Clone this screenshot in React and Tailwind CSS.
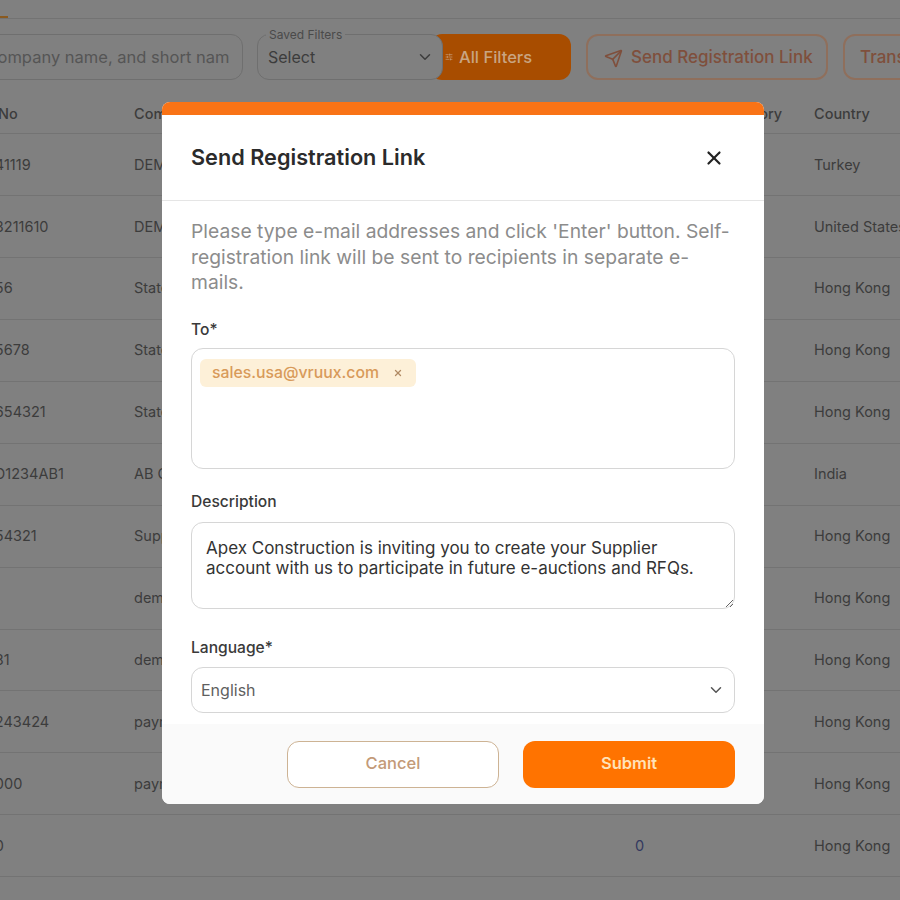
import React from 'react';
import { ChevronDown, Send, SlidersHorizontal, X } from 'lucide-react';

const rows = [
  { no: '12345641119', company: 'DEMO Company', country: 'Turkey' },
  { no: '1234563211610', company: 'DEMO Company', country: 'United States' },
  { no: '12345656', company: 'State Company', country: 'Hong Kong' },
  { no: '1234565678', company: 'State Company', country: 'Hong Kong' },
  { no: '123456654321', company: 'State Company', country: 'Hong Kong' },
  { no: '123456D1234AB1', company: 'AB Company', country: 'India' },
  { no: '12345654321', company: 'Supplier', country: 'Hong Kong' },
  { no: '', company: 'demo', country: 'Hong Kong' },
  { no: '12345681', company: 'demo', country: 'Hong Kong' },
  { no: '123456243424', company: 'payment', country: 'Hong Kong' },
  { no: '123456000', company: 'payment', country: 'Hong Kong' },
  { no: '1234560', company: '', zero: '0', country: 'Hong Kong' },
  { no: '', company: '', country: '' },
];

const cols = 'grid grid-cols-[190px_501px_83px_96px_200px] -ml-[56px] w-[1070px] items-center';

const TableRow = ({ row }) => (
  <div className={`${cols} h-[61.95px] shrink-0 border-b border-[#737373] text-[14.5px] text-[#3c3c3c]`}>
    <span>{row.no}</span>
    <span>{row.company}</span>
    <span className="text-[#33395f]">{row.zero}</span>
    <span />
    <span>{row.country}</span>
  </div>
);

const App = () => {
  return (
    <div className="relative h-[900px] w-[900px] overflow-hidden bg-[#808080] font-[Inter,sans-serif]">
      {/* Page behind the dialog, already dimmed */}
      <div className="relative h-[19px] border-b border-[#737373]">
        <div className="absolute bottom-0 left-0 h-[2px] w-[8px] bg-[#8a5a20]" />
      </div>

      <div className="mt-[15px] flex h-[46px] items-stretch">
        <div className="-ml-[108px] flex w-[351px] shrink-0 items-center overflow-hidden rounded-xl border border-[#6f6f6f] pl-[12px]">
          <span className="w-[324px] shrink-0 overflow-hidden whitespace-nowrap text-[16.5px] text-[#555555]">Search by company name, and short name</span>
        </div>
        <div className="relative z-10 ml-[14px] flex w-[186px] shrink-0 items-center justify-between rounded-xl border border-[#6f6f6f] bg-[#808080] pl-[10px] pr-[8px]">
          <span className="absolute -top-[6px] left-[8px] bg-[#808080] px-[3px] text-[12px] leading-[12px] text-[#4a4a4a]">Saved Filters</span>
          <span className="text-[16px] text-[#3c3c3c]">Select</span>
          <ChevronDown className="h-[18px] w-[18px] text-[#3c3c3c]" />
        </div>
        <div className="-ml-[13px] flex w-[141px] shrink-0 items-center gap-[6px] rounded-xl bg-[#a84d00] pl-[15px] text-[16.5px] font-medium text-[#c9a582]">
          <SlidersHorizontal className="h-[8px] w-[8px]" />
          <span>All Filters</span>
        </div>
        <div className="ml-[15px] flex w-[242px] shrink-0 items-center gap-[8px] rounded-xl border-2 border-[#8f6f5c] pl-[16px] pt-[2px] text-[17px] font-medium text-[#7f4f3c]">
          <Send className="h-[19px] w-[19px]" />
          <span>Send Registration Link</span>
        </div>
        <div className="ml-[15px] flex w-[120px] shrink-0 items-center rounded-xl border-2 border-[#8f6f5c] pl-[15px] pt-[2px] text-[17px] font-medium text-[#7f4f3c]">
          <span>Transfer</span>
        </div>
      </div>

      <div className={`${cols} mt-[15px] h-[39px] border-b border-[#737373] text-[14.5px] font-medium text-[#3c3c3c]`}>
        <span>Vendor No</span>
        <span>Company</span>
        <span />
        <span>Category</span>
        <span>Country</span>
      </div>
      {rows.map((row, i) => (
        <TableRow key={i} row={row} />
      ))}

      {/* Dialog */}
      <div className="absolute left-[162px] top-[102px] z-30 flex h-[702px] w-[602px] flex-col overflow-hidden rounded-lg bg-white">
        <div className="h-[13px] shrink-0 bg-[#f97316]" />

        <div className="flex h-[86px] shrink-0 items-center justify-between border-b border-[#e5e5e5] pl-[29px] pr-[39px]">
          <h2 className="text-[21.7px] font-semibold text-[#2b2b2b]">Send Registration Link</h2>
          <X className="h-[22px] w-[22px] text-[#222222]" strokeWidth={2.4} />
        </div>

        <div className="flex flex-1 flex-col px-[29px] pt-[18px]">
          <p className="text-[19.3px] leading-[25.5px] text-[#8c8c8c]">
            Please type e-mail addresses and click 'Enter' button. Self-registration link will be sent to recipients in separate e-mails.
          </p>

          <label className="mt-[24px] text-[15.6px] font-medium leading-[20px] text-[#3a3a3a]">To*</label>
          <div className="mt-[8px] h-[121px] rounded-xl border border-[#d6d6d6] p-[10px] pl-[8px]">
            <span className="inline-flex h-[28px] w-[216px] items-center justify-between rounded-md bg-[#fdf0d8] pl-[12px] pr-[13px] text-[15.8px] font-medium text-[#d89a5a]">
              sales.usa@vruux.com
              <X className="h-[10px] w-[10px] text-[#b08a64]" strokeWidth={3} />
            </span>
          </div>

          <label className="mt-[23px] text-[15.6px] font-medium leading-[20px] text-[#3a3a3a]">Description</label>
          <textarea
            className="mt-[10px] h-[87px] rounded-xl border border-[#d6d6d6] px-[14px] py-[15px] text-[17px] leading-[20px] text-[#333333] outline-none"
            defaultValue="Apex Construction is inviting you to create your Supplier account with us to participate in future e-auctions and RFQs."
          />

          <label className="mt-[29px] text-[15.6px] font-medium leading-[20px] text-[#3a3a3a]">Language*</label>
          <div className="mt-[9px] flex h-[46px] items-center justify-between rounded-xl border border-[#d6d6d6] pl-[9px] pr-[9px] text-[16px] text-[#5f5f5f]">
            <span>English</span>
            <ChevronDown className="h-[18px] w-[18px] text-[#555555]" />
          </div>
        </div>

        <div className="flex h-[80px] shrink-0 justify-end gap-[24px] bg-[#fafafa] pr-[29px] pt-[17px]">
          <button className="h-[47px] w-[212px] rounded-xl border-[1.5px] border-[#cdb394] bg-white pb-[2px] text-[16.5px] font-medium text-[#c39a78]">Cancel</button>
          <button className="h-[47px] w-[212px] rounded-xl bg-[#ff7300] pb-[2px] text-[16.5px] font-semibold text-[#ffe2b8]">Submit</button>
        </div>
      </div>
    </div>
  );
};

export default App;
